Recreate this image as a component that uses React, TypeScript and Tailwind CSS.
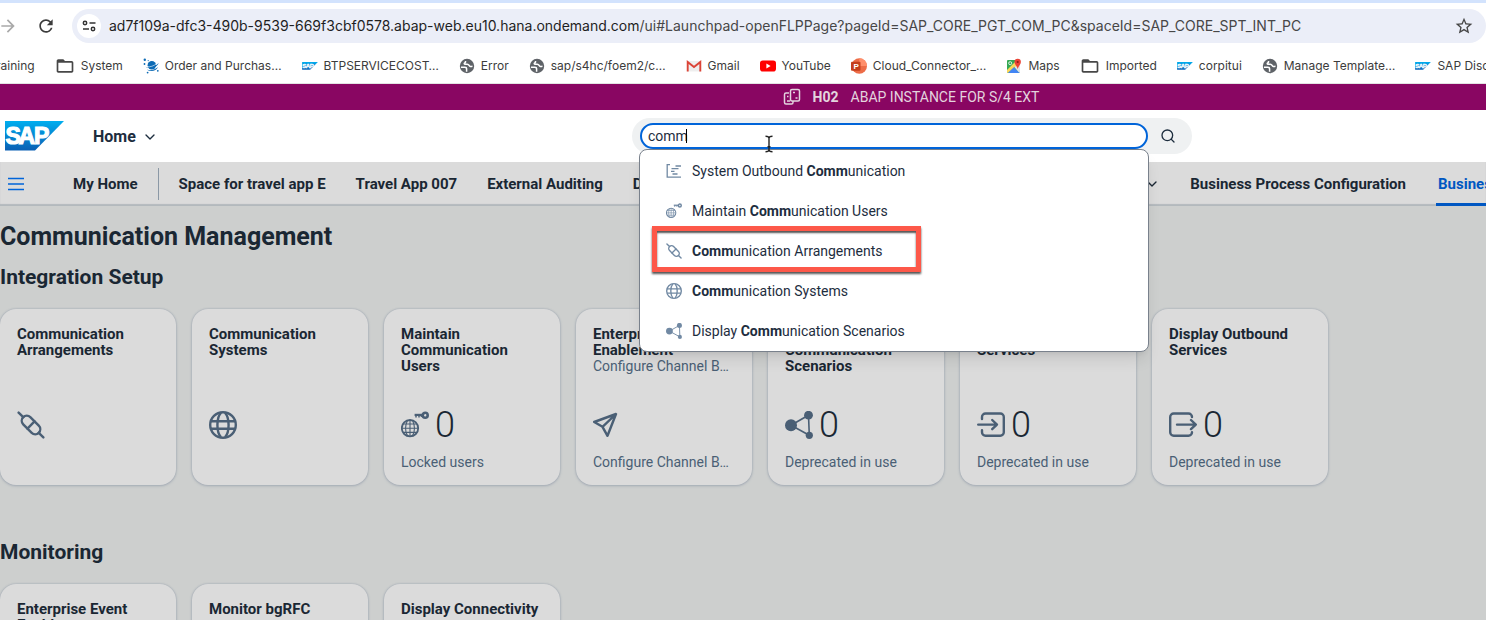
import type { ReactNode } from 'react';
import { ChevronDown, Search } from 'lucide-react';
import { MdArrowForward, MdFolderOpen, MdRefresh, MdStarBorder } from 'react-icons/md';

type IconProps = { className?: string; stroke?: number };

const ConnectedIcon = ({ className, stroke = 2.4 }: IconProps) => (
  <svg viewBox="0 0 28 28" className={className} fill="none" stroke="currentColor" strokeWidth={stroke} strokeLinecap="round" aria-hidden="true">
    <g transform="translate(14 14) rotate(45)">
      <rect x="-11" y="-5" width="22" height="10" rx="5" />
      <path d="M-17.5 0H-11M11 0h6.5M0-5V5" />
    </g>
  </svg>
);

const GlobeIcon = ({ className, stroke = 2.4 }: IconProps) => (
  <svg viewBox="0 0 28 28" className={className} fill="none" stroke="currentColor" strokeWidth={stroke} aria-hidden="true">
    <circle cx="14" cy="14" r="12.8" />
    <path d="M2 10.2h24M2 17.8h24M12 1.6C7.2 7 7.2 21 12 26.4M16 1.6C20.8 7 20.8 21 16 26.4" />
  </svg>
);

const GlobeKeyIcon = ({ className }: IconProps) => (
  <svg viewBox="0 0 28 28" className={className} fill="none" stroke="currentColor" aria-hidden="true">
    <circle cx="9" cy="17.2" r="8.2" strokeWidth="1.8" />
    <path d="M9 9v16.4M1 17.2h16M2.2 13h13.6M2.2 21.4h13.6M6.5 9.5c-2.6 4.5-2.6 11 0 15.4M11.5 9.5c2.6 4.500 2.6 11 0 15.400" strokeWidth="1.1" />
    <circle cx="24.2" cy="4.3" r="2.5" strokeWidth="2.6" />
    <path d="M13.600 3.900h8.400" strokeWidth="2.2" />
    <path d="M15 4v2.600M18 4v2.400M20.400 4v2" strokeWidth="1.500" />
  </svg>
);

const PlaneIcon = ({ className }: IconProps) => (
  <svg viewBox="0 0 28 28" className={className} fill="none" stroke="currentColor" strokeWidth="2.4" strokeLinejoin="round" aria-hidden="true">
    <path d="M23 3 1.200 11l8.300 4.800 5 9L23 3ZM23 3 9.500 15.800" />
  </svg>
);

const ShareIcon = ({ className }: IconProps) => (
  <svg viewBox="0 0 28 28" className={className} fill="currentColor" stroke="currentColor" aria-hidden="true">
    <g stroke="none">
      <circle cx="6" cy="14.200" r="6" />
      <circle cx="23.500" cy="4.200" r="4.400" />
      <circle cx="24.300" cy="24.300" r="3.600" />
    </g>
    <path d="M6 14.200 23.500 4.200l.8 20.100Z" fill="none" strokeWidth="1.600" />
  </svg>
);

const InboundIcon = ({ className }: IconProps) => (
  <svg viewBox="0 0 28 28" className={className} fill="none" stroke="currentColor" strokeWidth="2.4" strokeLinecap="round" strokeLinejoin="round" aria-hidden="true">
    <path d="M5 8V6a3.500 3.500 0 0 1 3.500-3.500h14.800a3.500 3.500 0 0 1 3.500 3.500v15.200a3.500 3.500 0 0 1-3.500 3.500H8.500A3.500 3.500 0 0 1 5 21.200v-2M1.200 13.600H20M15.200 9l4.800 4.600-4.800 4.600" />
  </svg>
);

const OutboundIcon = ({ className }: IconProps) => (
  <svg viewBox="0 0 28 28" className={className} fill="none" stroke="currentColor" strokeWidth="2.4" strokeLinecap="round" strokeLinejoin="round" aria-hidden="true">
    <path d="M23 6a3.500 3.500 0 0 0-3.500-3.500H4.700A3.500 3.500 0 0 0 1.200 6v15.200a3.500 3.500 0 0 0 3.500 3.500h14.800A3.500 3.500 0 0 0 23 21.200M8 13.600h18.800M22 9l4.800 4.600-4.800 4.600" />
  </svg>
);

const GanttIcon = ({ className }: IconProps) => (
  <svg viewBox="0 0 16 16" className={className} fill="none" stroke="currentColor" strokeWidth="1.3" aria-hidden="true">
    <path d="M1.200 1v13.200H15M1 1.700h3M9.500 3H15M5.500 5.600h7M5 8.300h3.500M6.500 11h5" />
  </svg>
);

const SapLogo = ({ className }: IconProps) => (
  <svg viewBox="0 0 59 30" className={className} role="img" aria-label="SAP">
    <defs>
      <linearGradient id="sap-blue" x1="0" y1="0" x2="0" y2="1">
        <stop offset="0" stopColor="#00aeef" />
        <stop offset="1" stopColor="#0a5fb4" />
      </linearGradient>
    </defs>
    <path d="M0 0h59L30 29.500H0Z" fill="url(#sap-blue)" />
    <text x="0.5 13.5 29" y="23" fontFamily="Liberation Sans, Arial, sans-serif" fontWeight="700" fontSize="23" fill="#fff" stroke="#fff" strokeWidth="1.200">SAP</text>
  </svg>
);

const SiteIcon = () => (
  <svg viewBox="0 0 16 16" className="size-4" aria-hidden="true">
    <circle cx="8" cy="8" r="7.200" fill="#5f6368" />
    <path d="M2 9.300h3.800c1.400 0 1.800.7 1.800 1.700v2.800M6.500 3v1.200c0 .6-1.300.4-1.300 1.300 0 1.300 2.300.7 3.800.9 1.200.2 1 2 2.300 2.200.8.100 1.500-.3 2.200-.3" fill="none" stroke="#fff" strokeWidth="1.500" />
  </svg>
);

const PlanetIcon = () => (
  <svg viewBox="0 0 16 16" className="size-4" aria-hidden="true">
    <g fill="#0d6bb5">
      <circle cx="8.800" cy="7.200" r="4.200" />
      <path d="M2.500 8.800c3 2 9 0 13.200-3.800-1.500 4-8 7.200-13.200 3.800ZM4 11.500c3.500 1.500 8 .2 11-2.500-1.500 4-7.500 5.500-11 2.500Z" />
      <circle cx="1.800" cy="1.800" r="1.200" />
      <circle cx="5.200" cy="2.600" r=".6" />
      <circle cx="1.500" cy="6" r=".9" />
      <circle cx="4.600" cy="14.600" r=".9" />
      <circle cx="14.800" cy="12.800" r=".9" />
    </g>
    <path d="M4.200 8.600c3 .6 6.500-.6 9.300-2.800" stroke="#fff" strokeWidth=".6" fill="none" />
  </svg>
);

const GmailIcon = () => (
  <svg viewBox="0 0 16 16" className="size-4" aria-hidden="true">
    <path d="M1 3h14v10.500H1Z" fill="#eee" />
    <path d="M1.700 13.500V4L8 9l6.300-5v9.500" fill="none" stroke="#db4437" strokeWidth="1.900" />
  </svg>
);

const YouTubeIcon = () => (
  <svg viewBox="0 0 16 16" className="size-4" aria-hidden="true">
    <rect x="0" y="2.500" width="16" height="11" rx="2.800" fill="#f00" />
    <path d="M6.400 5.600v4.800L10.600 8Z" fill="#fff" />
  </svg>
);

const SlidesIcon = () => (
  <svg viewBox="0 0 16 16" className="size-4" aria-hidden="true">
    <circle cx="8.300" cy="8" r="7.700" fill="#ed6c47" />
    <path d="M8.300.3a7.700 7.700 0 0 1 7.700 7.700H8.300Z" fill="#ff8f6b" />
    <rect x="0" y="3.800" width="9.500" height="9" rx="1" fill="#c43e1c" />
    <text x="2.400" y="11" fontFamily="Liberation Sans, Arial, sans-serif" fontWeight="700" fontSize="8" fill="#fff">P</text>
  </svg>
);

const MapsIcon = () => (
  <svg viewBox="0 0 16 16" className="size-4" aria-hidden="true">
    <rect x="1" y="2" width="13" height="13" rx="1" fill="#34a853" />
    <path d="M8 8.500 14 5v9a1 1 0 0 1-1 1Z" fill="#dfe3e6" />
    <path d="m1 12 8-8 2 3-9 8a1 1 0 0 1-1-1Z" fill="#fbd75b" />
    <path d="M2 15 7.800 9.200 13.500 15Z" fill="#4285f4" />
    <path d="M11.700 11C11 8 8.500 6.500 8.500 4a3.200 3.200 0 0 1 6.400 0c0 2.500-2.500 4-3.200 7Z" fill="#ea4335" />
    <circle cx="11.700" cy="4" r="1.100" fill="#8c1d18" />
    <circle cx="4.200" cy="5.200" r="1.500" fill="none" stroke="#fff" strokeWidth=".8" />
  </svg>
);

const folder = <MdFolderOpen className="size-5 text-[#474747]" />;
const sap = <SapLogo className="h-2 w-4" />;

const bookmarks: { icon: ReactNode; label: string }[] = [
  { icon: folder, label: 'System' },
  { icon: <PlanetIcon />, label: 'Order and Purchas…' },
  { icon: sap, label: 'BTPSERVICECOST…' },
  { icon: <SiteIcon />, label: 'Error' },
  { icon: <SiteIcon />, label: 'sap/s4hc/foem2/c…' },
  { icon: <GmailIcon />, label: 'Gmail' },
  { icon: <YouTubeIcon />, label: 'YouTube' },
  { icon: <SlidesIcon />, label: 'Cloud_Connector_…' },
  { icon: <MapsIcon />, label: 'Maps' },
  { icon: folder, label: 'Imported' },
  { icon: sap, label: 'corpitui' },
  { icon: <SiteIcon />, label: 'Manage Template…' },
  { icon: sap, label: 'SAP Discovery' },
];

function BrowserBar() {
  return (
    <div className="border-b border-t-[3px] border-b-[#e3e3e3] border-t-[#d3e3fd] bg-white font-['Inter',sans-serif]">
      <div className="flex items-center pt-1.5">
        <button aria-label="Forward" className="-ml-0.5 text-[#a9a9a9]"><MdArrowForward className="size-5" /></button>
        <button aria-label="Reload" className="ml-[18px] text-[#3c3c3c]"><MdRefresh className="size-5" /></button>
        <div className="ml-4 flex h-[34px] min-w-0 flex-1 items-center rounded-full bg-[#ebeef8] pl-[5px] pr-3">
          <button aria-label="Site information" className="flex size-6 shrink-0 items-center justify-center rounded-full bg-white">
            <svg viewBox="0 0 14 14" className="size-3.5" fill="none" stroke="#333" strokeWidth="1.500" aria-hidden="true">
              <circle cx="3" cy="4" r="1.700" /><path d="M7.500 4h6M1 10h6" /><circle cx="11" cy="10" r="1.700" />
            </svg>
          </button>
          <span className="ml-2 min-w-0 flex-1 truncate text-sm text-[#474747]">
            <span className="text-[#1f1f1f]">ad7f109a-dfc3-490b-9539-669f3cbf0578.abap-web.eu10.hana.ondemand.com</span>
            /ui#Launchpad-openFLPPage?pageId=SAP_CORE_PGT_COM_PC&amp;spaceId=SAP_CORE_SPT_INT_PC
          </span>
          <button aria-label="Bookmark this page" className="text-[#474747]"><MdStarBorder className="size-5" /></button>
        </div>
      </div>
      <nav aria-label="Bookmarks" className="flex h-10 items-center gap-5 overflow-hidden pt-1.5 text-xs text-[#3c3c3c]">
        <a href="#training" className="-ml-[11px] shrink-0">Training</a>
        {bookmarks.map((b) => (
          <a key={b.label} href="#bookmark" className="flex shrink-0 items-center gap-1.5">{b.icon}{b.label}</a>
        ))}
      </nav>
    </div>
  );
}

const suggestionIcon = 'size-4 shrink-0 text-[#7189a3]';
const suggestions = [
  { icon: <GanttIcon className={suggestionIcon} />, before: 'System Outbound ', after: 'unication' },
  { icon: <GlobeKeyIcon className={suggestionIcon} />, before: 'Maintain ', after: 'unication Users' },
  { icon: <ConnectedIcon className={suggestionIcon} />, before: '', after: 'unication Arrangements', marked: true },
  { icon: <GlobeIcon className={suggestionIcon} />, before: '', after: 'unication Systems' },
  { icon: <ShareIcon className={suggestionIcon} />, before: 'Display ', after: 'unication Scenarios' },
];

function SearchBox() {
  return (
    <div className="flex h-9 items-center rounded-full bg-[#eff1f2] pl-2 pr-4">
      <div className="relative w-[508px]">
        <input
          type="text"
          aria-label="Search"
          defaultValue="comm"
          className="block h-[26px] w-full rounded-full border-2 border-[#0064d9] bg-white px-1.5 text-sm text-[#1d2d3e] outline-none"
        />
        <span className="absolute left-[46px] top-1.5 h-3.5 w-px bg-black" />
        <ul className="absolute -inset-x-px top-[26px] z-10 rounded-lg border border-[#79818c] bg-white pt-px text-sm text-[#1d2d3e] shadow-lg">
          {suggestions.map((s) => (
            <li key={s.before + s.after} className="relative">
              <button className="flex h-10 w-full items-center gap-2.5 pl-[26px] text-left">
                {s.icon}
                <span>{s.before}<b>Comm</b>{s.after}</span>
              </button>
              {s.marked && (
                <span className="pointer-events-none absolute -top-[5px] left-3 h-[46px] w-[269px] border-[5px] border-[#fd5849] shadow-[0_2px_2px_#555,inset_0_2px_2px_#555]" />
              )}
            </li>
          ))}
        </ul>
        <svg viewBox="0 0 10 18" className="pointer-events-none absolute left-[124px] top-3 z-20 h-[18px] w-2.5" fill="none" stroke="#222" strokeWidth="1.400" aria-hidden="true">
          <path d="M1.500 1.200C3.500 1.200 5 2 5 3.200v11.600c0 1.200-1.500 2-3.500 2M8.500 1.200C6.500 1.200 5 2 5 3.200M8.500 16.800c-2 0-3.500-.8-3.500-2M3.500 11.800h3" />
        </svg>
      </div>
      <button aria-label="Start search" className="ml-3 text-[#1d2d3e]"><Search className="size-4" /></button>
    </div>
  );
}

function Shell() {
  return (
    <header>
      <div className="flex h-[26px] items-center justify-center bg-[#890662] pl-[336px] text-sm text-[#e3d3de]">
        <svg viewBox="0 0 18 18" className="mr-3 size-[18px]" fill="none" stroke="currentColor" strokeWidth="1.500" aria-hidden="true">
          <path d="M6 5H3a1.500 1.500 0 0 0-1.500 1.500v8A1.500 1.500 0 0 0 3 16h5.500a1.500 1.500 0 0 0 1.500-1.500V13" />
          <rect x="7.500" y="1.500" width="9" height="11.500" rx="1.500" />
          <path d="M4 8.500h1.500M4 13h3M10 4.500h2M12.500 10h2" />
        </svg>
        <b className="mr-3">H02</b>
        <span>ABAP INSTANCE FOR S/4 EXT</span>
      </div>
      <div className="flex h-[52px] items-center bg-white">
        <div className="flex w-[338px] shrink-0 items-center pl-[5px]">
          <SapLogo className="h-[30px] w-[59px]" />
          <button className="ml-[29px] flex items-center gap-1.5 pt-0.5 text-base font-bold text-[#1d2d3e]">
            Home <ChevronDown className="size-4" />
          </button>
        </div>
        <div className="flex flex-1 justify-center"><SearchBox /></div>
      </div>
      <nav aria-label="Spaces" className="flex h-11 items-center gap-[30px] overflow-hidden bg-[#dbdbdb] pl-2 text-[15px] font-bold text-[#1a2733] shadow-[inset_0_-2px_1px_#b3b9bd]">
        <button aria-label="Menu" className="mr-[19px] text-[#0064d9]">
          <svg viewBox="0 0 16 14" className="h-3.5 w-4" stroke="currentColor" strokeWidth="1.300" aria-hidden="true"><path d="M0 1.500h16M0 7h16M0 12.500h16" /></svg>
        </button>
        <a href="#home" className="-mr-2.5">My Home</a>
        <span className="-mr-2.5 h-8 w-px bg-[#8b98a5]" />
        <a href="#travel">Space for travel app E</a>
        <a href="#travel007">Travel App 007</a>
        <a href="#auditing">External Auditing</a>
        <a href="#d">D</a>
        <button aria-label="More pages" className="ml-auto"><ChevronDown className="size-4" /></button>
        <a href="#process" className="whitespace-nowrap">Business Process Configuration</a>
        <a href="#business" className="flex h-11 w-[50px] items-center overflow-hidden border-b-[3px] border-[#0057c2] pl-0.5 pt-[3px] text-[#0057c2]">Business</a>
      </nav>
    </header>
  );
}

type TileData = { title: string; subtitle?: string; icon?: ReactNode; value?: string; footer?: string };
const tileIcon = 'size-7 shrink-0 text-[#4a5f75]';

const setupTiles: TileData[] = [
  { title: 'Communication Arrangements', icon: <ConnectedIcon className={tileIcon} /> },
  { title: 'Communication Systems', icon: <GlobeIcon className={tileIcon} /> },
  { title: 'Maintain Communication Users', icon: <GlobeKeyIcon className={tileIcon} />, value: '0', footer: 'Locked users' },
  { title: 'Enterprise Event Enablement', subtitle: 'Configure Channel B…', icon: <PlaneIcon className={tileIcon} />, footer: 'Configure Channel B…' },
  { title: 'Display Communication Scenarios', icon: <ShareIcon className={tileIcon} />, value: '0', footer: 'Deprecated in use' },
  { title: 'Display Inbound Services', icon: <InboundIcon className={tileIcon} />, value: '0', footer: 'Deprecated in use' },
  { title: 'Display Outbound Services', icon: <OutboundIcon className={tileIcon} />, value: '0', footer: 'Deprecated in use' },
];
const monitoringTiles: TileData[] = [
  { title: 'Enterprise Event Enablement' },
  { title: 'Monitor bgRFC' },
  { title: 'Display Connectivity' },
];

function Tile({ title, subtitle, icon, value, footer }: TileData) {
  return (
    <a href="#app" className="block size-44 shrink-0 rounded-2xl bg-[#dbdbdb] px-[17px] pt-[17px] text-[#1a2733] shadow-[0_0_2px_#9aa3ae,0_1px_3px_#a9b0b8]">
      <div className="h-[81px]">
        <h3 className="text-[15px] font-bold leading-4">{title}</h3>
        {subtitle && <p className="whitespace-nowrap text-sm leading-4 text-[#4a5f75]">{subtitle}</p>}
      </div>
      <div className="flex h-9 items-center gap-1.5">
        {icon}
        {value && <span className="text-4xl font-light">{value}</span>}
      </div>
      {footer && <p className="mt-[9px] whitespace-nowrap text-sm text-[#4a5f75]">{footer}</p>}
    </a>
  );
}

function Section({ title, tiles }: { title: string; tiles: TileData[] }) {
  return (
    <section>
      <h2 className="pb-5 text-[21px] font-bold leading-6">{title}</h2>
      <div className="flex gap-4">{tiles.map((t) => <Tile key={t.title} {...t} />)}</div>
    </section>
  );
}

export default function App() {
  return (
    <div className="flex h-screen flex-col overflow-hidden bg-[#cdcfce] font-['Roboto',sans-serif] text-[#1a2733]">
      <BrowserBar />
      <Shell />
      <main className="min-h-0 flex-1 overflow-hidden pt-[17px]">
        <h1 className="text-[25px] font-bold leading-7">Communication Management</h1>
        <div className="flex flex-col gap-[55px] pt-3.5">
          <Section title="Integration Setup" tiles={setupTiles} />
          <Section title="Monitoring" tiles={monitoringTiles} />
        </div>
      </main>
    </div>
  );
}
